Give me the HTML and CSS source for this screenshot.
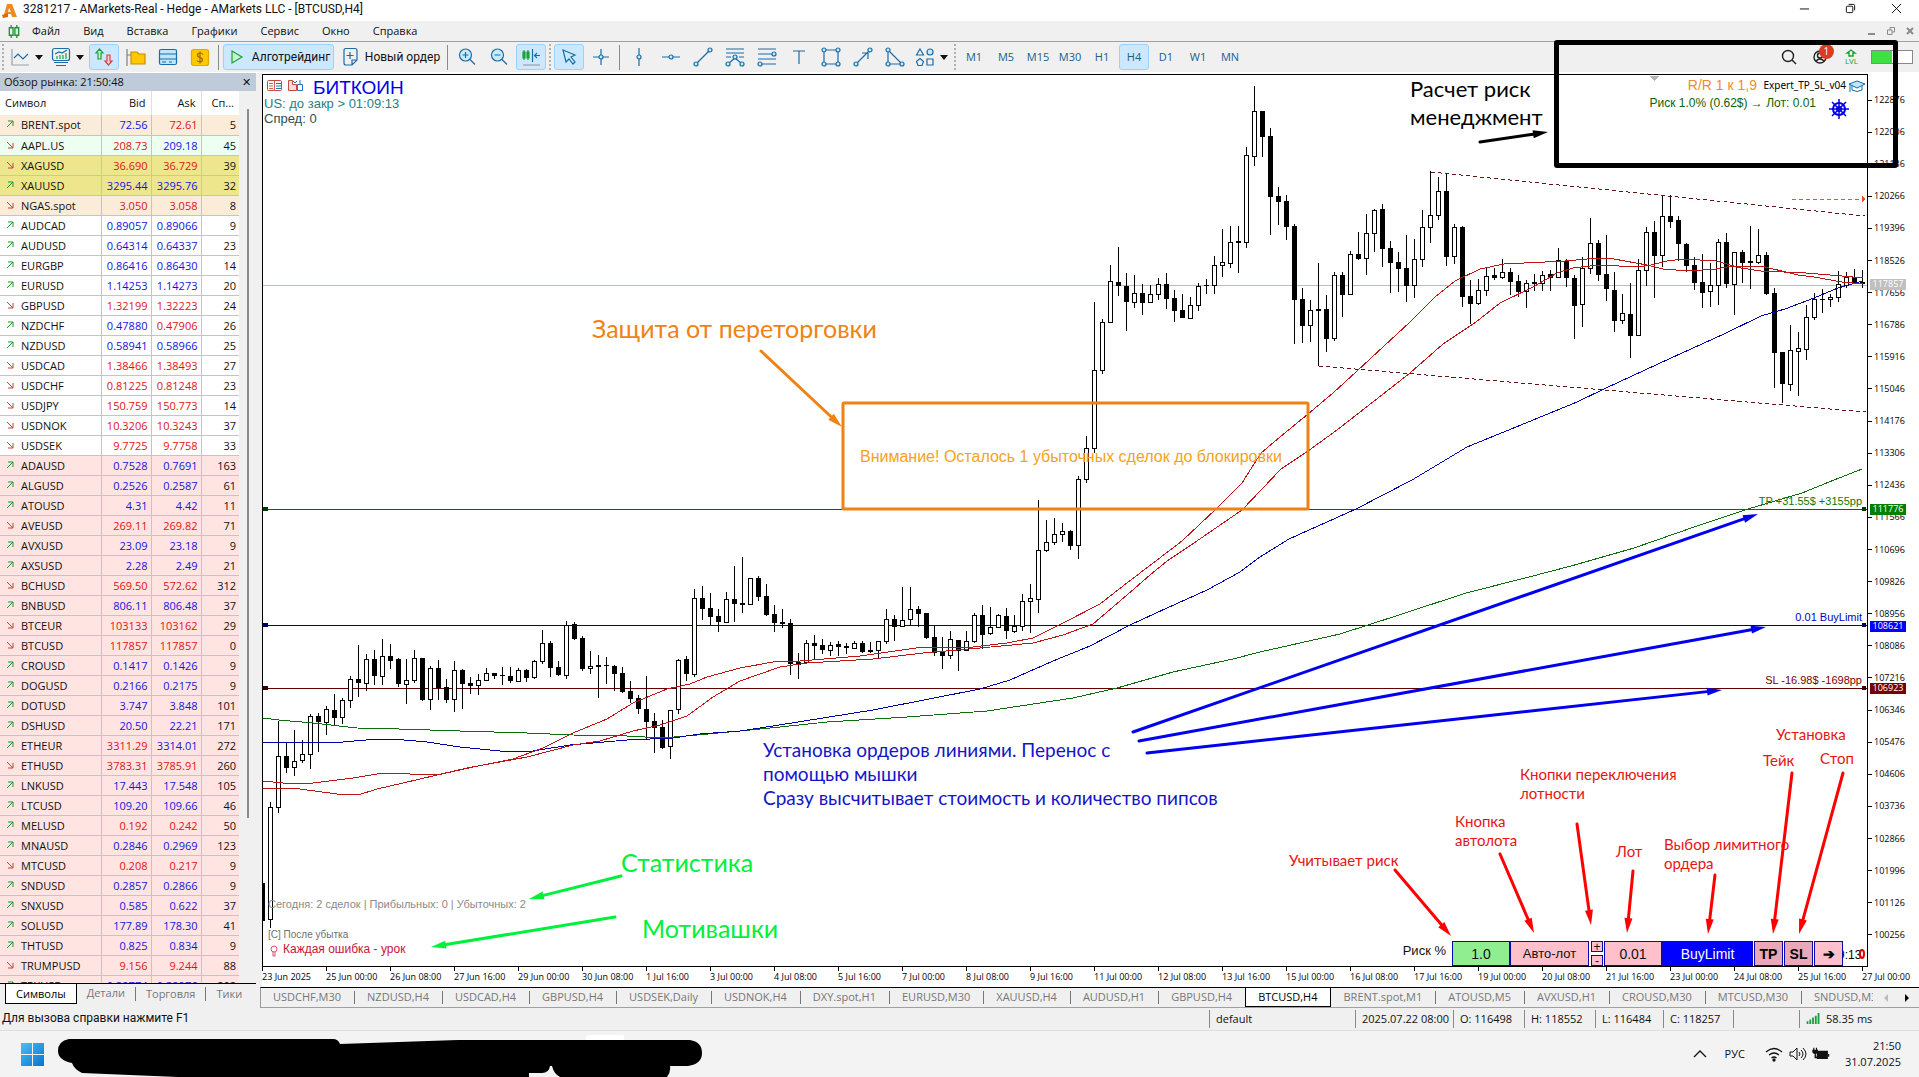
FILE: index.html
```html
<!DOCTYPE html>
<html lang="ru">
<head>
<meta charset="utf-8">
<title>3281217 - AMarkets-Real - Hedge - AMarkets LLC - [BTCUSD,H4]</title>
<link rel="stylesheet" href="styles.css">
</head>
<body>
<header class="titlebar">
  <svg class="logo" viewBox="0 0 16 16"><path d="M5 1h5l5 13h-5l-1-3H6l-1 2-4 2zM7 5l-1 4h3z" fill="#ef8a1d" fill-rule="evenodd"/><path d="M0 12l6-2v4l-5 1z" fill="#e06c00"/></svg>
  <span class="title">3281217 - AMarkets-Real - Hedge - AMarkets LLC - [BTCUSD,H4]</span>
  <div class="winbtns">
    <button aria-label="Свернуть"><svg viewBox="0 0 12 12"><path d="M1 6.500h10"/></svg></button>
    <button aria-label="Восстановить"><svg viewBox="0 0 12 12"><rect x="1.500" y="3.500" width="7" height="7" rx="1"/><path d="M4 1.500h5q1.500 0 1.500 1.500v5"/></svg></button>
    <button aria-label="Закрыть"><svg viewBox="0 0 12 12"><path d="M1 1l10 10M11 1L1 11"/></svg></button>
  </div>
</header>
<nav class="menubar">
  <svg class="candleicon" viewBox="0 0 12 16"><path d="M3 1v3M3 12v3M9 1v3M9 12v3M1 4h4v8H1zM7 4h4v8H7z" fill="none" stroke="#17962b" stroke-width="1.400"/></svg>
  <button>Файл</button><button>Вид</button><button>Вставка</button><button>Графики</button><button>Сервис</button><button>Окно</button><button>Справка</button>
  <div class="mdibtns">
    <button aria-label="Свернуть окно"><svg viewBox="0 0 10 10"><path d="M1 8h7"/></svg></button>
    <button aria-label="Восстановить окно"><svg viewBox="0 0 10 10"><path d="M1.500 4h4.500v4.500h-4.500zM4 4V1.500h4.500V6H6"/></svg></button>
    <button aria-label="Закрыть окно"><svg viewBox="0 0 10 10"><path d="M2 2l6 6M8 2l-6 6"/></svg></button>
  </div>
</nav>
<div class="toolbar" id="toolbar">
  <i class="grip"></i>
  <button class="tool menu" aria-label="Тип графика"><svg viewBox="0 0 20 20"><path d="M2 2v16h17" stroke="#9aa0a5"/><path d="M4 11l4-4 5 5 5-5"/></svg><b></b></button>
  <button class="tool menu" aria-label="Индикаторы"><svg viewBox="0 0 20 20"><rect x="1.500" y="1.500" width="17" height="12" rx="2"/><path d="M3 15.500h14M5 18.500h10M4 7l4-2 3 1 5-3"/><path d="M6 12V9M9 12V8M12 12V8M15 12V6" stroke="#1ba33a"/></svg><b></b></button>
  <button class="tool on" aria-label="Обзор рынка"><svg viewBox="0 0 20 20"><path d="M7 12V6H9L5.500 2 2 6H4v6z" fill="#c8f3cf" stroke="#1ba33a"/><path d="M13 8v6h-2l3.500 4 3.500-4h-2V8z" fill="#ffd0d0" stroke="#d4404a"/></svg></button>
  <button class="tool" aria-label="Навигатор"><svg viewBox="0 0 20 20"><path d="M1 2v17M1 8h4" stroke="#7d8287"/><path d="M5 5h6l2 2h6v10H5z" fill="#ffc800" stroke="#c98f00"/></svg></button>
  <button class="tool" aria-label="Инструменты"><svg viewBox="0 0 20 20"><rect x="1.500" y="2.500" width="17" height="15" rx="1.500" fill="#bfe6fb"/><path d="M2 7h16M2 12h16M4 15h4M11 15h3"/></svg></button>
  <button class="tool" aria-label="Счёт"><svg viewBox="0 0 20 20"><rect x="1.500" y="2.500" width="17" height="16" rx="2" fill="#ffc800" stroke="#e0a800"/><path d="M13 7.500q-1-1.500-3-1.500-2.500 0-2.500 2T10 10.500t2.500 2.300T10 15q-2 0-3-1.500M10 4.500v12" stroke="#9a6b00"/></svg></button>
  <i class="sep"></i>
  <button class="tool wide algo on"><svg viewBox="0 0 20 20"><path d="M5 4l10 6-10 6z" fill="#c8f3cf" stroke="#1ba33a"/></svg>Алготрейдинг</button>
  <button class="tool wide neworder"><svg viewBox="0 0 20 20"><path d="M6 1.500h9q2 0 2 2V13l-5 5H6q-2 0-2-2V3.500q0-2 2-2zM12 18v-5h5M10 5v7M6.500 8.500h7"/></svg>Новый ордер</button>
  <i class="sep"></i>
  <button class="tool" aria-label="Увеличить"><svg viewBox="0 0 20 20"><circle cx="8.500" cy="8" r="6" fill="#c6ecfc"/><path d="M13 12.500l5 5M5.500 8h6M8.500 5v6"/></svg></button>
  <button class="tool" aria-label="Уменьшить"><svg viewBox="0 0 20 20"><circle cx="8.500" cy="8" r="6" fill="#c6ecfc"/><path d="M13 12.500l5 5M5.500 8h6"/></svg></button>
  <button class="tool on" aria-label="Сдвиг графика"><svg viewBox="0 0 20 20"><path d="M3 3v10M7 3v10M2 5h2v6H2zM6 5h2v6H6z" stroke="#1ba33a"/><path d="M11.500 2v13M19 8.500h-5M16 6l-2.500 2.500L16 11"/><path d="M2 18h17" stroke="#9aa0a5"/></svg></button>
  <i class="grip"></i>
  <button class="tool on" aria-label="Курсор"><svg viewBox="0 0 20 20"><path d="M4 3l12 5-4 2 4 5-2 2-4-5-3 3z" fill="#c6ecfc"/></svg></button>
  <button class="tool" aria-label="Перекрестие"><svg viewBox="0 0 20 20"><path d="M10 2v6M10 12v6M2 10h6M12 10h6"/><circle cx="10" cy="10" r="2"/></svg></button>
  <i class="sep"></i>
  <button class="tool" aria-label="Вертикальная линия"><svg viewBox="0 0 20 20"><path d="M10 1v7M10 12v7"/><circle cx="10" cy="10" r="2"/></svg></button>
  <button class="tool" aria-label="Горизонтальная линия"><svg viewBox="0 0 20 20"><path d="M1 10h7M12 10h7"/><circle cx="10" cy="10" r="2"/></svg></button>
  <button class="tool" aria-label="Трендовая линия"><svg viewBox="0 0 20 20"><path d="M4 16L16 4"/><circle cx="3" cy="17" r="2"/><circle cx="17" cy="3" r="2"/></svg></button>
  <button class="tool" aria-label="Веер"><svg viewBox="0 0 20 20"><path d="M1 2h18M1 6h18M1 10h5M14 10h5M10 11l-6 5M10 11l6 5"/><circle cx="10" cy="10" r="2"/><circle cx="3" cy="17" r="2"/><circle cx="17" cy="17" r="2"/></svg></button>
  <button class="tool" aria-label="Уровни Фибоначчи"><svg viewBox="0 0 20 20"><path d="M1 2h18M1 7h14M1 12h18M5 17h14"/><circle cx="17" cy="7" r="2"/><circle cx="3" cy="17" r="2"/></svg></button>
  <button class="tool" aria-label="Текст"><svg viewBox="0 0 20 20"><path d="M4 4h12M10 4v13"/></svg></button>
  <button class="tool" aria-label="Прямоугольник"><svg viewBox="0 0 20 20"><path d="M3 5v10M17 5v10M5 3h10M5 17h10"/><circle cx="3" cy="3" r="2"/><circle cx="17" cy="3" r="2"/><circle cx="3" cy="17" r="2"/><circle cx="17" cy="17" r="2"/></svg></button>
  <button class="tool" aria-label="Стрелка"><svg viewBox="0 0 20 20"><path d="M4 16L15 5M9 6h6v6"/><circle cx="3" cy="17" r="2"/><circle cx="17" cy="3" r="2"/></svg></button>
  <button class="tool" aria-label="Треугольник"><svg viewBox="0 0 20 20"><path d="M3 5v10M5 17h10M4 4l12 12"/><circle cx="3" cy="3" r="2"/><circle cx="3" cy="17" r="2"/><circle cx="17" cy="17" r="2"/></svg></button>
  <button class="tool menu" aria-label="Фигуры"><svg viewBox="0 0 20 20"><path d="M5 2l3.500 6h-7zM12 12h6v6h-6z"/><circle cx="15" cy="5" r="3"/><path d="M5 11.500l3.500 3-1.500 4H3l-1.500-4z"/></svg><b></b></button>
  <i class="grip"></i>
  <button class="tool tf">M1</button><button class="tool tf">M5</button><button class="tool tf">M15</button><button class="tool tf">M30</button><button class="tool tf">H1</button><button class="tool tf on">H4</button><button class="tool tf">D1</button><button class="tool tf">W1</button><button class="tool tf">MN</button>
  <div class="tools-right">
    <button aria-label="Поиск"><svg viewBox="0 0 20 20"><circle cx="9" cy="9" r="5.500"/><path d="M13 13l4 4"/></svg></button>
    <button class="user" aria-label="Профиль"><svg viewBox="0 0 20 20"><circle cx="8" cy="10" r="6"/><circle cx="8" cy="8.500" r="2.500"/><path d="M4 14q4-4 8 0"/></svg><span class="badge">1</span></button>
    <button class="lvl" aria-label="Уровень"><svg viewBox="0 0 12 8"><path d="M4 7V4H2l4-3 4 3H8v3z"/></svg><span>LVL</span></button>
    <span class="battery"><i></i></span>
  </div>
</div>

<main>
  <aside class="watch">
    <div class="watch-head"><span>Обзор рынка: 21:50:48</span><button aria-label="Закрыть панель">✕</button></div>
    <div class="watch-body">
      <table>
        <thead><tr><th>Символ</th><th>Bid</th><th>Ask</th><th>Сп...</th></tr></thead>
        <tbody id="quotes"></tbody>
      </table>
      <i class="scroll"></i>
    </div>
    <div class="watch-tabs"><button class="active">Символы</button><button>Детали</button><button>Торговля</button><button>Тики</button></div>
  </aside>

  <section class="chart">
    <div class="plot">
      <svg id="canvas" viewBox="263 75 1604 891">
        <g class="crisp">
          <path class="l-price" d="M263 285.500H1867"/>
          <path class="l-tp" d="M263 509.500H1867"/>
          <path class="l-buy" d="M263 625.500H1867"/>
          <path class="l-sl" d="M263 688.500H1867"/>
          <g id="candles"></g>
          <polyline class="ma green" points="263,718 279,720 313,723 357,728 399,729 460,731 527,733 573,735 627,736 663,738 697,735 740,731 780,727 827,722 907,717 987,711 1073,698 1117,688 1173,672 1233,659 1260,652 1340,634 1399,615 1466,593 1529,577 1571,566 1634,548 1697,526 1748,509 1802,493 1834,480 1862,469"/>
          <polyline class="ma blue" points="263,742 343,742 377,739 393,739 427,742 460,747 500,751 533,751 570,745 627,740 673,738 700,734 740,731 773,726 873,710 980,689 1010,680 1053,661 1090,646 1130,625 1167,608 1207,590 1240,572 1260,557 1289,539 1356,509 1412,480 1467,447 1516,427 1577,402 1606,388 1671,358 1724,334 1761,316 1785,309 1814,298 1838,288 1863,281"/>
          <polyline class="ma red" points="263,781 283,783 313,783 353,778 383,773 437,775 473,767 513,759 543,748 573,733 607,719 633,703 667,689 690,684 707,677 740,668 773,662 800,661 860,656 923,647 973,647 1007,643 1033,638 1063,623 1100,604 1123,586 1182,541 1216,509 1242,483 1261,453 1280,437 1308,414 1333,393 1357,371 1410,322 1435,297 1455,281 1480,269 1504,264 1565,261 1598,258 1614,259 1647,265 1663,269 1688,271 1716,269 1732,266 1761,266 1798,275 1814,277 1842,282 1863,284"/>
          <polyline class="ma red" points="263,788 300,789 337,794 358,795 377,789 403,783 437,775 467,768 527,757 573,745 600,741 633,731 660,725 687,716 713,697 740,681 780,667 807,663 873,659 923,653 980,648 1033,643 1063,635 1093,624 1127,595 1150,575 1167,561 1194,543 1242,510 1281,469 1308,451 1337,430 1378,398 1410,373 1443,344 1476,322 1500,303 1533,287 1557,273 1573,268 1598,265 1639,267 1651,265 1667,261 1683,259 1716,261 1741,268 1761,271 1806,273 1842,276 1863,278"/>
          <path class="trend" d="M1431 172L1865 216M1319 366L1866 412"/>
          <path d="M1792 199.500h70" stroke="#f0501e" stroke-dasharray="4 3"/>
          <path d="M1862 195.500v7l4-3.500z" fill="#f0501e"/>
          <path d="M1649 76h10l-5 5z" fill="#b4b4b4"/>
          <path d="M263 507h5v4h-5zM1862 507h4v4h-4z" fill="#003a00"/>
          <path d="M263 623h5v4h-5zM1862 623h4v4h-4z" fill="#000060"/>
          <path d="M263 686h5v4h-5zM1862 686h4v4h-4z" fill="#3a0000"/>
        </g>
        <g fill="none">
          <rect x="267.500" y="80.500" width="14" height="10" rx="1" fill="#fff" stroke="#c34b46"/><path d="M274.500 81v10M269 83.500h4M269 86h4M269 88.500h4" stroke="#d4605a"/><path d="M276 83.500h5M276 86h5M276 88.500h5" stroke="#2b6fb5"/>
          <path d="M288.500 80.500h4v4h4v6h-8z" fill="#ffd9d6" stroke="#c34b46"/><path d="M293 81l2 2 2-2M297.500 84.500h5v6h-5zM300 80v4" stroke="#2b6fb5"/>
          <g stroke="#0a6fb0"><path d="M1849 84l8-3 8 3-8 4z" fill="#bfe6fb"/><path d="M1852 86v4q5 3 10 0v-4M1850 85v7"/></g>
          <g stroke="#0000e0" stroke-width="2"><circle cx="1839" cy="109" r="6"/><circle cx="1839" cy="109" r="2"/><path d="M1839 99v20M1829 109h20M1832 102l14 14M1846 102l-14 14" stroke-width="1.500"/></g>
          <g stroke="#e05070"><circle cx="274" cy="949" r="3"/><path d="M273 952v4h2v-4"/></g>
        </g>
        <g class="arial">
          <text x="313" y="94" class="s19" fill="#0000e8">БИТКОИН</text>
          <text x="264" y="108" class="s13" fill="#1f8080">US: до закр &gt; 01:09:13</text>
          <text x="264" y="123" class="s13" fill="#2f4f4f">Спред: 0</text>
          <text x="1757" y="90" class="s14 end" fill="#f28c28">R/R 1 к 1,9</text>
          <text x="1816" y="107" class="s12 end" fill="#0b640b">Риск 1.0% (0.62$) → Лот: 0.01</text>
          <text x="1846" y="89" class="s10 end noto" fill="#000">Expert_TP_SL_v04</text>
          <text x="1862" y="505" class="s11 end" fill="#0a7a0a">TP +31.55$ +3155pp</text>
          <text x="1862" y="621" class="s11 end" fill="#0000c8">0.01 BuyLimit</text>
          <text x="1862" y="684" class="s11 end" fill="#780000">SL -16.98$ -1698pp</text>
          <text x="268" y="908" class="s11" fill="#8a8a8a">Сегодня: 2 сделок | Прибыльных: 0 | Убыточных: 2</text>
          <text x="268" y="938" class="s10" fill="#707070">[C] После убытка</text>
          <text x="283" y="953" class="s12" fill="#c8143c">Каждая ошибка - урок</text>
          <text x="860" y="462" class="s16" fill="#f2a31b">Внимание! Осталось 1 убыточных сделок до блокировки</text>
          <text x="1838" y="959" class="s12" fill="#000">9:13</text>
          <ellipse cx="1862" cy="954" rx="2" ry="4" fill="none" stroke="#e00000" stroke-width="2"/>
        </g>
        <rect x="843" y="403" width="465" height="106" rx="1" fill="none" stroke="#f08214" stroke-width="3"/>
        <g id="arrows"></g>
        <g class="note">
          <text x="592" y="338" class="s25" fill="#f08214">Защита от переторговки</text>
          <text x="1410" y="97" class="s22">Расчет риск</text><text x="1410" y="125" class="s22">менеджмент</text>
          <g fill="#1414c8" class="s19"><text x="763" y="757">Установка ордеров линиями. Перенос с</text><text x="763" y="781">помощью мышки</text><text x="763" y="805">Сразу высчитывает стоимость и количество пипсов</text></g>
          <g fill="#00f03c" class="s25"><text x="621" y="872">Статистика</text><text x="642" y="938">Мотивашки</text></g>
          <g fill="#e61414" class="s15">
            <text x="1776" y="740">Установка</text><text x="1763" y="766">Тейк</text><text x="1820" y="764">Стоп</text>
            <text x="1520" y="780">Кнопки переключения</text><text x="1520" y="799">лотности</text>
            <text x="1455" y="827">Кнопка</text><text x="1455" y="846">автолота</text>
            <text x="1289" y="866">Учитывает риск</text><text x="1616" y="857">Лот</text>
            <text x="1664" y="850">Выбор лимитного</text><text x="1664" y="869">ордера</text>
          </g>
        </g>
      </svg>
      <form class="order">
        <label for="risk">Риск %</label>
        <input id="risk" class="risk" value="1.0">
        <button type="button" class="auto">Авто-лот</button>
        <span class="step"><button type="button">+</button><button type="button">-</button></span>
        <input aria-label="Лот" class="lot" value="0.01">
        <button type="button" class="limit">BuyLimit</button>
        <button type="button" class="sq">TP</button>
        <button type="button" class="sq">SL</button>
        <button type="button" class="sq next">➔</button>
      </form>
    </div>
    <div class="prices">
      <div class="scale" id="scale"></div>
      <span class="tag t-price">117857</span><span class="tag t-tp">111776</span><span class="tag t-buy">108621</span><span class="tag t-sl">106923</span>
    </div>
    <div class="times" id="times"></div>
    <div class="frame"></div>
    <div class="chart-tabs">
      <div class="tabs" id="tabs"></div>
      <button class="pager off" aria-label="Назад"></button><button class="pager" aria-label="Вперёд"></button>
    </div>
  </section>
</main>

<footer class="status">
  <span class="hint">Для вызова справки нажмите F1</span>
  <span class="w146">default</span><span class="w98">2025.07.22 08:00</span><span class="w71">O: 116498</span><span class="w71">H: 118552</span><span class="w68">L: 116484</span><span class="w70">C: 118257</span><span class="w66"></span>
  <span class="w120"><svg viewBox="0 0 15 12"><path d="M1 12V9M4 12V7M7 12V5M10 12V3M13 12V0" stroke="#1f9d3a" stroke-width="2"/></svg>58.35 ms</span>
</footer>
<div class="taskbar">
  <button class="start" aria-label="Пуск"><svg viewBox="0 0 23 23"><defs><linearGradient id="win" x1="0" y1="0" x2="1" y2="1" gradientUnits="objectBoundingBox"><stop offset="0" stop-color="#48c0f0"/><stop offset="1" stop-color="#0a72d0"/></linearGradient></defs><path d="M0 0h11v11H0zM12 0h11v11H12zM0 12h11v11H0zM12 12h11v11H12z" fill="url(#win)"/></svg></button>
  <svg class="strip" viewBox="0 0 650 46"><rect x="528" y="4" width="38" height="10" rx="2" fill="#fff"/><path d="M11 8H275q5 0 7 5L400 9H632q12 2 12 13 0 11-14 13h-18q1 6-3 11H502q-6-3-8-11h-2q-1 7-8 7h-13v4H120L24 42q-8-4-10-10Q0 29 0 20 0 10 11 8z" fill="#000"/></svg>
  <div class="tray">
    <svg viewBox="0 0 20 20"><path d="M4 13l6-6 6 6" /></svg>
    <span class="lang">РУС</span>
    <svg viewBox="0 0 20 20"><path d="M2 8q8-7 16 0M5 11q5-4 10 0M7.500 14q2.500-2 5 0"/><circle cx="10" cy="16" r="1" fill="#111"/></svg>
    <svg viewBox="0 0 20 20"><path d="M3 8h3l4-4v12l-4-4H3zM12 8q2 2 0 4M14 6q4 4 0 8M16 4q6 6 0 12" stroke-width="1"/></svg>
    <svg class="bat" viewBox="0 0 20 20"><path d="M6 7h11v8H6zM18.500 10v3" fill="#111"/><path d="M2 3v3M5 3v3M1 6h5v2q-2.500 3-5 0zM3.500 9v5h2" fill="#111"/></svg>
    <div class="clock"><span>21:50</span><span>31.07.2025</span></div>
  </div>
</div>
<script src="app.js"></script>
</body>
</html>
```
FILE: styles.css
```css
* { box-sizing: border-box; }
body { margin: 0; height: 100vh; display: flex; flex-direction: column; overflow: hidden; background: #f0f0f0; color: #111; font: 12px/16px "Open Sans", "Noto Sans", sans-serif; }
button { border: 0; background: none; padding: 0; margin: 0; font: inherit; color: inherit; }
svg { display: block; }

.titlebar { flex: none; height: 21px; background: #fff; display: flex; align-items: center; padding-left: 2px; }
.logo { width: 16px; height: 16px; }
.title { margin-left: 5px; padding-bottom: 3px; flex: 1; font-family: Roboto, sans-serif; }
.winbtns { display: flex; padding-bottom: 4px; }
.winbtns button { width: 46px; display: flex; justify-content: center; }
.winbtns svg { width: 11px; height: 11px; fill: none; stroke: #000; }

.menubar { flex: none; height: 21px; display: flex; align-items: center; gap: 23px; padding-left: 8px; border-bottom: 1px solid #a0a0a0; font-size: 11px; }
.candleicon { width: 12px; height: 15px; margin-right: -11px; }
.mdibtns { margin-left: auto; display: flex; gap: 9px; padding-right: 4px; }
.mdibtns svg { width: 10px; height: 10px; fill: none; stroke: #8a8a8a; stroke-width: 2; }
.mdibtns button:nth-child(2) svg { stroke-width: 1; }

.toolbar { flex: none; height: 31px; display: flex; align-items: center; border-bottom: 1px solid #fff; }
.grip { width: 2px; height: 26px; margin: 0 2px; border-left: 2px dotted #b0b0b0; }
.sep { width: 1px; height: 25px; margin: 0 3px 0 2px; background: #8a8a8a; }
.tool { flex: none; width: 30px; height: 26px; margin: 0 1px; border: 1px solid transparent; border-radius: 3px; display: flex; align-items: center; justify-content: center; }
.tool svg { width: 20px; height: 20px; fill: none; stroke: #1b6ca8; stroke-width: 1.200; }
.tool circle { fill: #c6ecfc; }
.tool.on { background: #cce8ff; border-color: #99d1ff; }
.tool.menu { width: 39px; gap: 5px; }
.tool.menu b { border: 4px solid transparent; border-top: 5px solid #111; border-bottom: 0; }
.tool.wide { font: 12px/16px Roboto, sans-serif; gap: 5px; }
.tool.algo { width: 111px; }
.tool.neworder { width: 108px; }
.tool.tf { color: #1b5e8c; font-size: 11px; }
.tools-right { margin-left: auto; display: flex; align-items: center; gap: 13px; padding-right: 6px; }
.tools-right svg { width: 20px; height: 20px; fill: none; stroke: #222; stroke-width: 1.400; }
.user { position: relative; }
.badge { position: absolute; left: 7px; top: -3px; width: 15px; height: 15px; border-radius: 8px; background: #dd3a22; color: #fff; font-size: 10px; line-height: 15px; }
.lvl { display: flex; flex-direction: column; align-items: center; color: #17a035; font-size: 8px; line-height: 8px; }
.lvl svg { width: 12px; height: 8px; stroke: #17a035; }
.battery { width: 42px; height: 14px; border: 1px solid #888; background: #fff; }
.battery i { display: block; width: 20px; height: 12px; background: #40e040; }

main { flex: 1; min-height: 0; display: flex; position: relative; }
.watch { flex: none; width: 262px; display: flex; flex-direction: column; padding-right: 6px; font-size: 11px; }
.watch-head { height: 18px; background: #bfcbd9; display: flex; justify-content: space-between; align-items: center; padding: 0 5px 0 4px; }
.watch-body { flex: 1; min-height: 0; overflow: hidden; display: flex; gap: 8px; }
.watch table { width: 239px; border-collapse: collapse; table-layout: fixed; align-self: flex-start; background: #fff; }
.watch th { height: 24px; padding: 0 5px; font-weight: 400; text-align: right; border-right: 1px solid #e0e0e0; }
.watch th:first-child { width: 101px; text-align: left; }
.watch th:nth-child(2), .watch th:nth-child(3) { width: 50px; }
.watch td { height: 20px; padding: 0 3px; text-align: right; border-right: 1px solid #c4c4c4; border-bottom: 1px solid #c4c4c4; line-height: 19px; overflow: hidden; white-space: nowrap; }
.watch td:first-child { text-align: left; padding-left: 21px; position: relative; }
.watch td:last-child, .watch th:last-child { border-right: 0; }
.watch td svg { position: absolute; left: 6px; top: 5px; width: 8px; height: 8px; fill: none; }
.row-oil { background: #fbebd9; } .row-us { background: #edfff0; } .row-metal { background: #eee68c; } .row-crypto { background: #ffe4e1; }
.u { color: #1414e0; } .d { color: #e01414; }
.scroll { width: 2px; height: 709px; margin-top: 18px; background: #8c8c8c; }
.watch-tabs { height: 25px; border-top: 1px solid #000; display: flex; align-items: flex-start; padding-left: 5px; color: #777; font-size: 11px; }
.watch-tabs button { height: 18px; padding: 0 10px; line-height: 18px; }
.watch-tabs button + button + button { border-left: 1px solid #777; height: 14px; margin-top: 3px; line-height: 12px; }
.watch-tabs .active { background: #fff; color: #000; border: 1px solid #000; border-top: 0; height: 20px; }

.chart { flex: 1; min-width: 0; padding-top: 1px; display: grid; grid-template-columns: minmax(0, 1fr) 51px; grid-template-rows: minmax(0, 1fr) 20px 21px; background: #fff; position: relative; }
.plot { position: relative; border: 1px solid #000; min-height: 0; }
#canvas { width: 100%; height: 100%; }
.crisp { shape-rendering: crispEdges; fill: none; }
.l-price { stroke: #b8bebc; } .l-tp { stroke: #0a640a; } .l-buy { stroke: #000090; } .l-sl { stroke: #640000; }
.ma.green { stroke: #0a6e0a; } .ma.blue { stroke: #0000aa; } .ma.red { stroke: #c01414; }
.trend { stroke: #641414; stroke-dasharray: 4 3; }
.wick { fill: #000; } .bull { fill: #fff; stroke: #000; } .bear { fill: #000; }
.arial { font-family: "Liberation Sans", Arial, sans-serif; }
.noto { font-family: "Noto Sans", sans-serif; }
.note { font-family: Lato, "Open Sans", sans-serif; }
.s10 { font-size: 10px; } .s11 { font-size: 11px; } .s12 { font-size: 12px; } .s13 { font-size: 13px; } .s14 { font-size: 14px; } .s15 { font-size: 15px; } .s16 { font-size: 16px; } .s19 { font-size: 19px; } .s22 { font-size: 22px; } .s25 { font-size: 25px; }
.end { text-anchor: end; }

.order { position: absolute; right: 24px; bottom: 0; height: 25px; display: flex; align-items: stretch; font: 14px/22px "Liberation Sans", Arial, sans-serif; }
.order label { margin-right: 6px; line-height: 20px; font-size: 13px; }
.order input, .order button { border: 1px solid #0a0ab4; background: #ffc0cb; color: #111; text-align: center; padding: 0; }
.order input { font: inherit; min-width: 0; border-radius: 0; }
.order .risk { width: 58px; background: #90ee90; }
.order .auto { width: 79px; font-size: 13px; }
.order .step { width: 12px; margin: 0 1px 0 2px; display: flex; flex-direction: column; justify-content: space-between; }
.order .step button { height: 11px; line-height: 8px; font-size: 12px; }
.order .lot { width: 58px; }
.order .limit { width: 91px; background: #0000ff; color: #fff; }
.order .sq { width: 29px; margin-left: 1px; background: #e8a8b8; color: #000; font-weight: 700; }
.order .next { background: #ffc0cb; }

.prices { position: relative; font: 9px/10px "Open Sans", sans-serif; color: #000; }
.scale { position: absolute; top: 21px; bottom: 27px; left: 0; right: 0; display: flex; flex-direction: column; justify-content: space-between; }
.scale span { display: flex; align-items: center; gap: 2px; height: 10px; }
.scale span::before { content: ""; width: 4px; height: 1px; background: #000; }
.tag { position: absolute; left: 2px; width: 36px; height: 11px; text-align: center; color: #fff; }
.t-price { top: 23%; background: #c0c0c0; } .t-tp { top: 48.200%; background: #008000; } .t-buy { top: 61.200%; background: #0000ff; } .t-sl { top: 68.200%; background: #780000; }
.times { grid-column: 1 / 3; display: flex; font: 9px/12px "Open Sans", sans-serif; color: #000; overflow: hidden; }
.times span { flex: 0 0 64px; white-space: nowrap; }
.times span::before { content: ""; display: block; width: 1px; height: 4px; background: #000; }
.frame { position: absolute; right: 21px; top: -33px; width: 344px; height: 128px; border: 5px solid #000; border-radius: 3px; pointer-events: none; }
.chart-tabs { grid-column: 1 / 3; display: flex; align-items: flex-start; background: #f0f0f0; border-top: 1px solid #000; border-left: 1px solid #999; border-bottom: 1px solid #a0a0a0; font-size: 11px; padding-right: 10px; color: #777; margin-left: -2px; }
.tabs { flex: 1; min-width: 0; display: flex; overflow: hidden; }
.tabs button { flex: none; padding: 0 13px; line-height: 18px; height: 18px; white-space: nowrap; position: relative; }
.tabs button:first-child { padding-left: 12px; }
.tabs button + button:not(.active):not(.active + button)::before { content: ""; position: absolute; left: 0; top: 3px; height: 13px; width: 1px; background: #777; }
.tabs .active { background: #fff; color: #000; border: 1px solid #000; border-top: 0; height: 19px; padding: 0 12px; }
.pager { width: 0; height: 0; border: 4px solid transparent; border-left: 4px solid #000; border-right: 0; margin: 6px 0 0 17px; }
.pager.off { border-left: 0; border-right: 4px solid #bbb; margin-left: 11px; }

.status { flex: none; height: 23px; display: flex; align-items: center; border-bottom: 1px solid #dedede; font-size: 11px; }
.status span { height: 18px; line-height: 17px; padding-left: 6px; border-left: 1px solid #888; white-space: nowrap; }
.status .hint { flex: 1; border: 0; padding-left: 2px; font-size: 12px; font-family: Roboto, sans-serif; }
.status svg { display: inline-block; width: 15px; height: 11px; margin-right: 5px; vertical-align: -1px; }
.w146 { width: 146px; } .w98 { width: 98px; } .w71 { width: 71px; } .w68 { width: 68px; } .w70 { width: 70px; } .w66 { width: 66px; } .w120 { width: 120px; }

.taskbar { flex: none; height: 46px; background: #f3f3f3; display: flex; align-items: center; padding: 0 18px 0 21px; }
.start svg { width: 23px; height: 23px; }
.strip { width: 650px; height: 46px; margin-left: 14px; }
.tray { margin-left: auto; display: flex; align-items: center; gap: 3px; font-size: 11px; }
.tray svg { width: 20px; height: 20px; fill: none; stroke: #111; stroke-width: 1.300; }
.tray .bat { width: 18px; height: 18px; margin-left: 2px; }
.lang { margin: 0 16px 0 12px; }
.clock { display: flex; flex-direction: column; align-items: flex-end; margin-left: 12px; }
```
FILE: app.js
```js
// symbol, tick direction, bid, ask, spread, bid colour, ask colour, row group
const quotes = `BRENT.spot u 72.56 72.61 5 u d oil
AAPL.US d 208.73 209.18 45 d u us
XAGUSD d 36.690 36.729 39 d d metal
XAUUSD u 3295.44 3295.76 32 u u metal
NGAS.spot d 3.050 3.058 8 d d oil
AUDCAD u 0.89057 0.89066 9 u u fx
AUDUSD u 0.64314 0.64337 23 u u fx
EURGBP u 0.86416 0.86430 14 u u fx
EURUSD u 1.14253 1.14273 20 u u fx
GBPUSD d 1.32199 1.32223 24 d d fx
NZDCHF u 0.47880 0.47906 26 u d fx
NZDUSD u 0.58941 0.58966 25 u u fx
USDCAD d 1.38466 1.38493 27 d d fx
USDCHF d 0.81225 0.81248 23 d d fx
USDJPY d 150.759 150.773 14 d d fx
USDNOK d 10.3206 10.3243 37 d d fx
USDSEK d 9.7725 9.7758 33 d d fx
ADAUSD u 0.7528 0.7691 163 u u crypto
ALGUSD u 0.2526 0.2587 61 u u crypto
ATOUSD u 4.31 4.42 11 u u crypto
AVEUSD d 269.11 269.82 71 d d crypto
AVXUSD u 23.09 23.18 9 u u crypto
AXSUSD u 2.28 2.49 21 u u crypto
BCHUSD d 569.50 572.62 312 d d crypto
BNBUSD u 806.11 806.48 37 u u crypto
BTCEUR d 103133 103162 29 d d crypto
BTCUSD d 117857 117857 0 d d crypto
CROUSD u 0.1417 0.1426 9 u u crypto
DOGUSD u 0.2166 0.2175 9 u u crypto
DOTUSD u 3.747 3.848 101 u u crypto
DSHUSD u 20.50 22.21 171 u u crypto
ETHEUR u 3311.29 3314.01 272 d u crypto
ETHUSD d 3783.31 3785.91 260 d d crypto
LNKUSD u 17.443 17.548 105 u u crypto
LTCUSD u 109.20 109.66 46 u u crypto
MELUSD u 0.192 0.242 50 d d crypto
MNAUSD u 0.2846 0.2969 123 u u crypto
MTCUSD d 0.208 0.217 9 d d crypto
SNDUSD u 0.2857 0.2866 9 u u crypto
SNXUSD u 0.585 0.622 37 u u crypto
SOLUSD u 177.89 178.30 41 u u crypto
THTUSD u 0.825 0.834 9 u u crypto
TRUMPUSD d 9.156 9.244 88 d d crypto
TRXUSD u 0.32774 0.32976 202 u u crypto`;
const tick = {
  u: '<svg viewBox="0 0 8 8"><path d="M1 7l6-6M2 1h5v5" stroke="#1a9a32"/></svg>',
  d: '<svg viewBox="0 0 8 8"><path d="M1 1l6 6M7 2v5H2" stroke="#d23c3c"/></svg>'
};
document.getElementById('quotes').innerHTML = quotes.split('\n').map(r => {
  const [s, t, b, a, sp, bc, ac, g] = r.split(' ');
  return `<tr class="row-${g}"><td>${tick[t]}${s}</td><td class="${bc}">${b}</td><td class="${ac}">${a}</td><td>${sp}</td></tr>`;
}).join('');

// high, body top, body bottom, low; "w" marks a rising candle
const candles = `883,883,921,921 802,807,919,928w 721,756,807,813w 743,756,768,773 730,761,767,776w 740,754,760,763w 714,716,754,769w 713,716,722,752 706,709,722,735w 694,710,718,725
698,700,717,724w 676,679,700,708w 645,679,683,697 654,659,683,691w 650,659,676,685 639,656,676,685w 644,656,661,669 658,659,684,687 659,680,684,704w 650,658,680,683w
658,658,700,701 666,668,699,710w 660,668,688,700 679,687,700,703 661,670,699,712w 669,670,684,709 677,683,686,694 674,680,685,695w 668,673,680,681w 673,673,676,679
667,675,676,685 667,676,681,683 668,670,681,682w 669,670,678,682 660,661,677,679w 630,643,661,664w 641,643,668,677 661,667,675,676 621,625,675,679w 622,624,639,640
636,638,669,671 651,666,668,674w 655,665,667,698 657,665,666,684 665,666,674,691 667,673,692,693 681,691,699,703 695,698,709,714 676,709,722,739 713,721,728,753
720,727,748,749 710,710,746,759w 659,660,709,714w 656,659,674,681 589,598,674,677w 586,598,609,620 593,608,617,625 609,616,622,632 592,599,622,622w 566,599,604,622
557,603,605,613 578,578,604,604w 576,578,597,601 584,596,615,616 605,614,623,632 609,622,624,628 619,623,664,675 653,662,665,679 640,643,662,663w 635,643,646,660
639,645,650,654 642,645,650,656w 641,644,647,656 643,646,648,654 641,643,648,649w 641,643,652,653 642,650,652,653 641,641,650,659w 609,619,641,644w 615,619,627,641
587,620,626,627w 587,609,619,625w 606,609,614,627 613,613,638,639 626,637,653,656 637,651,656,669 631,639,655,659w 640,640,651,671 631,641,650,651w 613,615,641,643w
605,615,635,649 607,627,633,635w 614,615,627,628w 608,616,631,639 615,626,631,633w 594,601,626,631w 584,598,601,633w 500,550,599,613w 520,542,550,552w 518,534,542,545w
523,531,534,542w 530,531,546,550 476,479,545,559w 436,448,479,483w 302,370,448,453w 319,322,370,374w 265,281,322,323w 247,282,286,296 273,286,302,331 275,293,302,308w
284,293,303,315 285,294,302,303w 278,284,294,300w 273,284,299,309 290,298,311,322 294,310,318,318 297,305,318,319w 283,286,305,311w 279,285,286,294 256,265,285,294w
229,262,265,277w 226,242,263,268w 226,241,243,273 147,155,242,248w 86,111,156,166w 111,111,137,157 128,136,197,235 187,196,202,225 195,201,227,240 224,226,300,344
288,299,326,343 300,310,325,342w 263,309,311,366 295,309,339,352 272,275,338,341w 272,275,295,317 251,254,294,295w 232,254,259,260 214,233,258,275w 209,210,233,252w
204,209,249,267 241,248,263,293 252,262,269,292 235,268,286,302 239,259,285,298w 210,227,259,267w 171,215,227,243w 177,191,215,220w 174,191,257,266 224,227,256,264w
226,227,297,307 280,296,304,324 279,290,303,305w 267,276,290,296w 268,275,278,280 259,272,277,279w 268,272,282,295 275,281,292,297 280,283,291,308w 274,282,284,291
271,275,283,291w 270,274,278,291 248,260,277,278w 259,261,278,287 275,278,306,339 257,268,304,327w 218,243,268,274w 240,243,275,281 235,274,289,301 272,290,321,332
294,313,320,324w 283,314,336,358 259,270,335,336w 227,232,270,286w 221,232,256,298 196,216,255,267w 195,216,222,228 216,220,244,261 243,244,266,272 257,265,283,290
254,282,293,308 263,285,291,307w 239,242,285,305w 233,242,284,288 252,252,284,315w 250,252,263,283 226,261,263,289 229,255,262,264w 252,255,294,295 288,293,353,388
352,352,384,403 325,350,384,391w 332,348,351,396w 305,317,349,360w 293,299,317,320w 289,299,300,313 294,297,299,307w 271,284,297,302w 272,277,285,288w 269,277,283,284
270,282,284,288`;
document.getElementById('candles').innerHTML = candles.split(/\s+/).map((c, k) => {
  const [h, t, b, l] = c.split(',').map(parseFloat), x = 262 + 8 * k;
  const wick = `<rect class="wick" x="${x}" y="${h}" width="1" height="${l - h}"/>`;
  return wick + (c.endsWith('w')
    ? `<rect class="bull" x="${x - 1.5}" y="${t + .5}" width="4" height="${b - t}"/>`
    : `<rect class="bear" x="${x - 2}" y="${t}" width="5" height="${b - t}"/>`);
}).join('');

// x1, y1, x2, y2, colour
const arrows = [
  [761, 351, 842, 427, '#f08214'], [1480, 142, 1548, 132, '#000'],
  [621, 876, 529, 899, '#00f03c'], [615, 917, 431, 947, '#00f03c'],
  [1133, 732, 1758, 514, '#0000f0'], [1139, 741, 1766, 627, '#0000f0'], [1147, 753, 1722, 690, '#0000f0'],
  [1395, 870, 1451, 936, '#f00'], [1500, 854, 1534, 933, '#f00'], [1577, 824, 1591, 925, '#f00'],
  [1633, 871, 1627, 933, '#f00'], [1715, 875, 1708, 934, '#f00'], [1792, 773, 1773, 934, '#f00'], [1843, 773, 1799, 934, '#f00']
];
document.getElementById('arrows').innerHTML = arrows.map(([x1, y1, x2, y2, c]) => {
  const d = Math.hypot(x2 - x1, y2 - y1), ux = (x2 - x1) / d, uy = (y2 - y1) / d;
  const bx = x2 - ux * 15, by = y2 - uy * 15;
  return `<path d="M${x1} ${y1}L${bx} ${by}" stroke="${c}" stroke-width="3" stroke-linecap="round"/>` +
    `<path d="M${x2} ${y2}L${bx - uy * 4} ${by + ux * 4}L${bx + uy * 4} ${by - ux * 4}z" fill="${c}"/>`;
}).join('');

document.getElementById('scale').innerHTML = Array.from({ length: 27 }, (_, i) => `<span>${122876 - 870 * i}</span>`).join('');
document.getElementById('times').innerHTML = ['23 Jun 2025', '25 Jun 00:00', '26 Jun 08:00', '27 Jun 16:00', '29 Jun 00:00', '30 Jun 08:00', '1 Jul 16:00', '3 Jul 00:00', '4 Jul 08:00', '5 Jul 16:00', '7 Jul 00:00', '8 Jul 08:00', '9 Jul 16:00', '11 Jul 00:00', '12 Jul 08:00', '13 Jul 16:00', '15 Jul 00:00', '16 Jul 08:00', '17 Jul 16:00', '19 Jul 00:00', '20 Jul 08:00', '21 Jul 16:00', '23 Jul 00:00', '24 Jul 08:00', '25 Jul 16:00', '27 Jul 00:00'].map(t => `<span>${t}</span>`).join('');
document.getElementById('tabs').innerHTML = ['USDCHF,M30', 'NZDUSD,H4', 'USDCAD,H4', 'GBPUSD,H4', 'USDSEK,Daily', 'USDNOK,H4', 'DXY.spot,H1', 'EURUSD,M30', 'XAUUSD,H4', 'AUDUSD,H1', 'GBPUSD,H4', 'BTCUSD,H4', 'BRENT.spot,M1', 'ATOUSD,M5', 'AVXUSD,H1', 'CROUSD,M30', 'MTCUSD,M30', 'SNDUSD,M30'].map(t => `<button${t === 'BTCUSD,H4' ? ' class="active"' : ''}>${t}</button>`).join('');
```
